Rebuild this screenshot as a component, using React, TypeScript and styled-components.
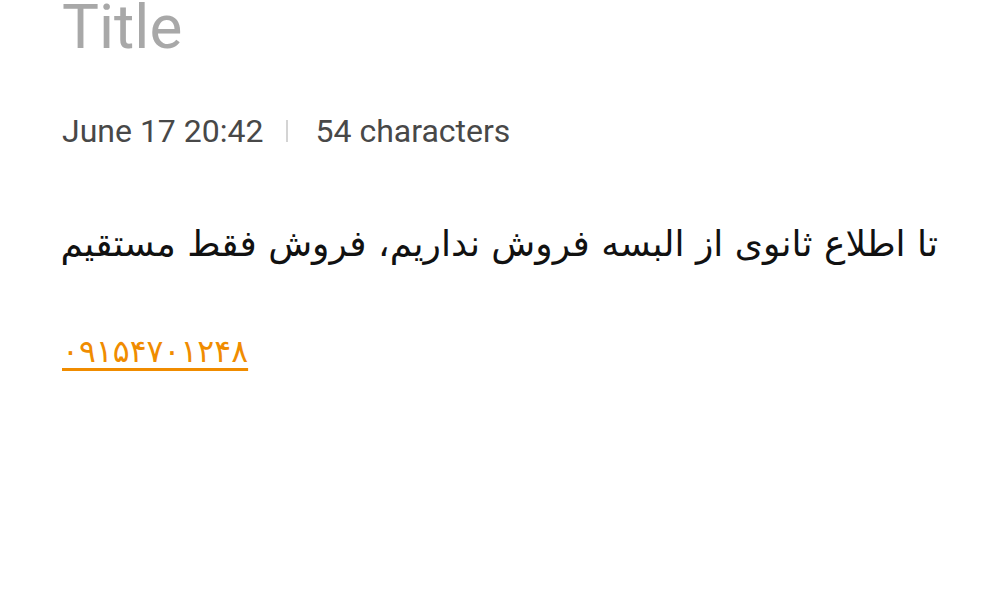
import styled, { createGlobalStyle } from "styled-components";

const Global = createGlobalStyle`
  html, body {
    margin: 0;
    padding: 0;
    background: #ffffff;
  }
  body {
    font-family: Roboto, "Noto Sans", sans-serif;
  }
`;

const Page = styled.div`
  width: 1000px;
  height: 592px;
  overflow: hidden;
  box-sizing: border-box;
  padding: 0 62px;
  display: flex;
  flex-direction: column;
`;

const Title = styled.h1`
  margin: -9px 0 0 0;
  font-family: Roboto, sans-serif;
  font-weight: 400;
  font-size: 62px;
  line-height: 72px;
  color: #a8a8a8;
`;

const Meta = styled.div`
  margin-top: 50px;
  display: flex;
  align-items: center;
  gap: 22px;
  font-family: Roboto, sans-serif;
  font-size: 32px;
  line-height: 36px;
  color: #484848;
`;

const Divider = styled.span`
  width: 2px;
  height: 22px;
  background: #d4d4d4;
  margin: 0 5px 0 1px;
`;

const Body = styled.div`
  margin-top: 65px;
  direction: rtl;
  text-align: right;
  white-space: nowrap;
  font-family: "DejaVu Sans", "Noto Sans", sans-serif;
  font-size: 36px;
  line-height: 60px;
  color: #111111;
`;

const Phone = styled.a`
  margin-top: 57px;
  align-self: flex-start;
  font-family: "DejaVu Sans", sans-serif;
  font-size: 31.5px;
  line-height: 40px;
  color: #f08c00;
  text-decoration: underline;
  text-underline-offset: 6px;
  text-decoration-thickness: 3px;
`;

export default function App() {
  return (
    <>
      <Global />
      <Page>
        <Title>Title</Title>
        <Meta>
          <span>June 17 20:42</span>
          <Divider />
          <span>54 characters</span>
        </Meta>
        <Body>تا اطلاع ثانوی از البسه فروش نداریم، فروش فقط مستقیم</Body>
        <Phone href="#">۰۹۱۵۴۷۰۱۲۴۸</Phone>
      </Page>
    </>
  );
}
